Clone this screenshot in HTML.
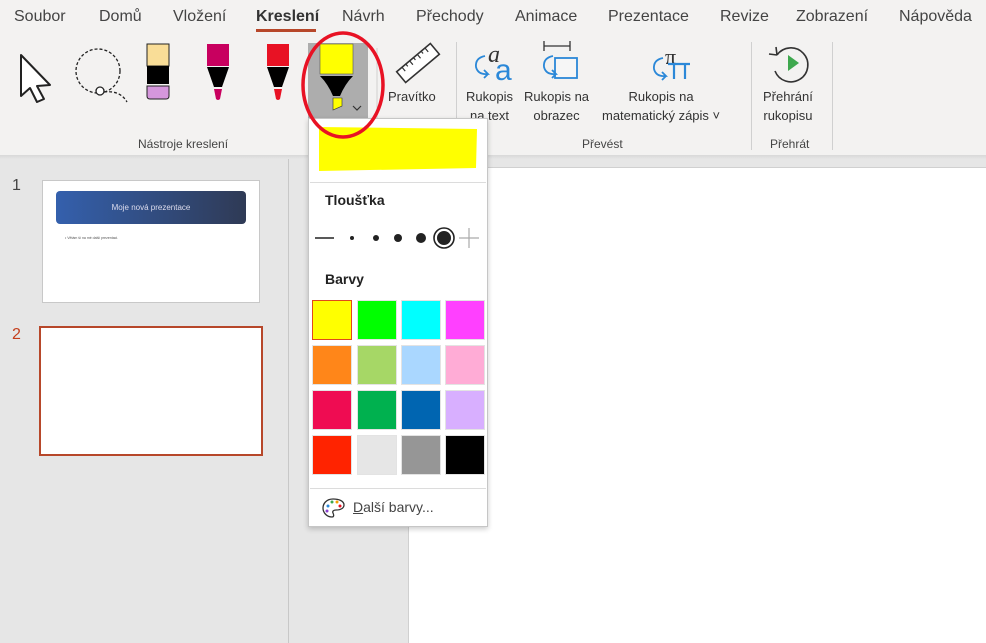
<!DOCTYPE html>
<html><head><meta charset="utf-8"><style>
*{margin:0;padding:0;box-sizing:border-box}
body{width:986px;height:643px;overflow:hidden;background:#e6e6e6;font-family:"Liberation Sans","DejaVu Sans",sans-serif;position:relative;color:#333}
.a{position:absolute}
.tab{position:absolute;top:8px;font-size:16px;color:#444;white-space:nowrap}
.lbl{position:absolute;font-size:13px;color:#333;text-align:center;line-height:19px;white-space:nowrap}
.grp{position:absolute;font-size:12px;color:#444;top:137px;white-space:nowrap}
.sw{position:absolute;width:40px;height:40px;border:1px solid #e3e3e3}
</style></head><body>
<div class="a" style="left:0;top:0;width:986px;height:155px;background:#f3f2f1"></div>
<div class="a" style="left:0;top:155px;width:986px;height:4px;background:linear-gradient(#d8d8d8,#e6e6e6)"></div>
<span class="tab" style="left:14px">Soubor</span>
<span class="tab" style="left:99px">Domů</span>
<span class="tab" style="left:173px">Vložení</span>
<span class="tab" style="left:256px;font-weight:bold;color:#333">Kreslení</span>
<div class="a" style="left:256px;top:29px;width:60px;height:3px;background:#b7472a"></div>
<span class="tab" style="left:342px">Návrh</span>
<span class="tab" style="left:416px">Přechody</span>
<span class="tab" style="left:515px">Animace</span>
<span class="tab" style="left:608px">Prezentace</span>
<span class="tab" style="left:720px">Revize</span>
<span class="tab" style="left:796px">Zobrazení</span>
<span class="tab" style="left:899px">Nápověda</span>

<svg class="a" style="left:0;top:0" width="986" height="130">
<g transform="translate(0,40)">
<path d="M21 15 L21 56 L30 48 L37 62 L44 59 L37 46 L50 45 Z" fill="#fff" stroke="#222" stroke-width="2" stroke-linejoin="round"/>
<circle cx="98" cy="31" r="22" fill="none" stroke="#222" stroke-width="1.3" stroke-dasharray="3 2"/>
<circle cx="100" cy="51" r="4" fill="#fff" stroke="#222" stroke-width="1.3"/>
<path d="M104 52 Q120 50 127 62" fill="none" stroke="#222" stroke-width="1.3" stroke-dasharray="3 2"/>
<rect x="147" y="4" width="22" height="22" fill="#f9dd97" stroke="#222"/>
<rect x="147" y="26" width="22" height="18" fill="#000"/>
<path d="M147 46 H169 V56 Q169 59 166 59 H150 Q147 59 147 56 Z" fill="#d597dc" stroke="#222"/>
<rect x="207" y="4" width="22" height="22" fill="#c8005f"/>
<path d="M207 27 H229 L222 47 H214 Z" fill="#000"/>
<path d="M214 49 H222 L220 59 Q218 61 216 59 Z" fill="#c8005f"/>
<rect x="267" y="4" width="22" height="22" fill="#e81224"/>
<path d="M267 27 H289 L282 47 H274 Z" fill="#000"/>
<path d="M274 49 H282 L280 59 Q278 61 276 59 Z" fill="#e81224"/>
<rect x="308" y="3" width="60" height="85" fill="#adadad"/>
<rect x="320" y="4" width="33" height="30" fill="#ff0" stroke="#555" stroke-width="0.6"/>
<path d="M320 36 H353 Q345 44 340 56 H333 Q328 44 320 36Z" fill="#000"/>
<path d="M333 58 H342 V66 L333 70 Z" fill="#ff0" stroke="#333" stroke-width="0.6"/>
<path d="M353 66 L357 70 L361 66" fill="none" stroke="#333" stroke-width="1.2"/>
<line x1="377" y1="8" x2="377" y2="88" stroke="#d0d0d0"/>
<g transform="translate(418,23) rotate(-40)"><rect x="-22" y="-7" width="44" height="14" fill="#fff" stroke="#333" stroke-width="1.6"/>
<path d="M-15 -7v5M-10 -7v3M-5 -7v5M0 -7v3M5 -7v5M10 -7v3M15 -7v5" stroke="#333" stroke-width="1.2"/></g>
</g>
<!-- convert icons -->
<text x="488" y="62" font-family="Liberation Serif" font-style="italic" font-size="24" fill="#333">a</text>
<path d="M485 56 Q475 58 476 67 Q478 75 488 74 L484 70 M488 74 L484 78" fill="none" stroke="#2b88d8" stroke-width="1.8"/>
<text x="495" y="80" font-size="30" fill="#2b88d8">a</text>
<path d="M544 46 H570 M544 41 v10 M570 41 v10" stroke="#333" stroke-width="1.3"/>
<rect x="555" y="58" width="22" height="20" fill="#f6f6f6" stroke="#2b88d8" stroke-width="1.8"/>
<path d="M553 56 Q543 58 544 67 Q546 75 556 74 L552 70 M556 74 L552 78" fill="none" stroke="#2b88d8" stroke-width="1.8"/>
<text x="665" y="64" font-family="Liberation Serif" font-size="22" fill="#333">π</text>
<path d="M663 58 Q653 60 654 69 Q656 77 666 76 L662 72 M666 76 L662 80" fill="none" stroke="#2b88d8" stroke-width="1.8"/>
<path d="M668 64 H690 M674 64 V79 M685 64 V79" stroke="#2b88d8" stroke-width="2.2" fill="none"/>
<path d="M777 55 A17 17 0 1 1 775 71 M777 55 L776 47 M777 55 L769 54" fill="none" stroke="#333" stroke-width="1.6"/>
<path d="M788 55 L799 63 L788 71 Z" fill="#3ea84e"/>
</svg>
<div class="lbl" style="left:388px;top:87px">Pravítko</div>
<div class="a" style="left:456px;top:42px;width:1px;height:108px;background:#d0d0d0"></div>
<div class="lbl" style="left:466px;top:87px">Rukopis<br>na text</div>
<div class="lbl" style="left:524px;top:87px">Rukopis na<br>obrazec</div>
<div class="lbl" style="left:602px;top:87px">Rukopis na<br>matematický zápis ˅</div>
<div class="a" style="left:751px;top:42px;width:1px;height:108px;background:#d0d0d0"></div>
<div class="lbl" style="left:763px;top:87px">Přehrání<br>rukopisu</div>
<div class="a" style="left:832px;top:42px;width:1px;height:108px;background:#d0d0d0"></div>
<div class="grp" style="left:138px">Nástroje kreslení</div>
<div class="grp" style="left:582px">Převést</div>
<div class="grp" style="left:770px">Přehrát</div>

<!-- left pane -->
<div class="a" style="left:288px;top:159px;width:1px;height:484px;background:#c8c8c8"></div>
<div class="a" style="left:12px;top:177px;font-size:16px;color:#444">1</div>
<div class="a" style="left:42px;top:180px;width:218px;height:123px;background:#fff;border:1px solid #c8c8c8">
 <div class="a" style="left:13px;top:10px;width:190px;height:33px;background:linear-gradient(90deg,#3460ad,#2f3a55);border-radius:4px;color:#dde;font-size:8px;text-align:center;line-height:33px">Moje nová prezentace</div>
 <div class="a" style="left:22px;top:55px;font-size:3.5px;color:#555">• Větám ší na mé další prezentaci.</div>
</div>
<div class="a" style="left:12px;top:326px;font-size:16px;color:#c43e1c">2</div>
<div class="a" style="left:39px;top:326px;width:224px;height:130px;background:#fff;border:2px solid #b7472a"></div>

<!-- slide -->
<div class="a" style="left:408px;top:167px;width:578px;height:476px;background:#fff;border-left:1px solid #d0d0d0;border-top:1px solid #d0d0d0"></div>

<!-- dropdown -->
<div class="a" style="left:308px;top:118px;width:180px;height:409px;background:#fff;border:1px solid #c6c6c6;box-shadow:0 2px 5px rgba(0,0,0,.2)"></div>
<svg class="a" style="left:318px;top:125px" width="162" height="50"><path d="M1 2 L159 4 L158 43 L1 46 Z" fill="#ff0"/></svg>
<div class="a" style="left:310px;top:182px;width:176px;height:1px;background:#dcdcdc"></div>
<div class="a" style="left:325px;top:192px;font-size:14px;font-weight:bold;color:#222">Tloušťka</div>
<svg class="a" style="left:312px;top:225px" width="170" height="26">
<line x1="3" y1="13" x2="22" y2="13" stroke="#222" stroke-width="1.5"/>
<circle cx="40" cy="13" r="2" fill="#222"/><circle cx="64" cy="13" r="3" fill="#222"/>
<circle cx="86" cy="13" r="4" fill="#222"/><circle cx="109" cy="13" r="5" fill="#222"/>
<circle cx="132" cy="13" r="10" fill="none" stroke="#222" stroke-width="1.6"/><circle cx="132" cy="13" r="7" fill="#222"/>
<path d="M147 13 H167 M157 3 V23" stroke="#aaa" stroke-width="1.2"/>
</svg>
<div class="a" style="left:325px;top:271px;font-size:14px;font-weight:bold;color:#222">Barvy</div>
<div class="sw" style="left:312px;top:300px;background:#ff0;border-color:#e04a1a"></div>
<div class="sw" style="left:357px;top:300px;background:#0f0"></div>
<div class="sw" style="left:401px;top:300px;background:#0ff"></div>
<div class="sw" style="left:445px;top:300px;background:#ff40ff"></div>
<div class="sw" style="left:312px;top:345px;background:#ff8619"></div>
<div class="sw" style="left:357px;top:345px;background:#a6d766"></div>
<div class="sw" style="left:401px;top:345px;background:#aad7ff"></div>
<div class="sw" style="left:445px;top:345px;background:#ffacd6"></div>
<div class="sw" style="left:312px;top:390px;background:#ef0c52"></div>
<div class="sw" style="left:357px;top:390px;background:#00b14f"></div>
<div class="sw" style="left:401px;top:390px;background:#0065b1"></div>
<div class="sw" style="left:445px;top:390px;background:#d8afff"></div>
<div class="sw" style="left:312px;top:435px;background:#ff2300"></div>
<div class="sw" style="left:357px;top:435px;background:#e6e6e6"></div>
<div class="sw" style="left:401px;top:435px;background:#969696"></div>
<div class="sw" style="left:445px;top:435px;background:#000"></div>
<div class="a" style="left:310px;top:488px;width:176px;height:1px;background:#dcdcdc"></div>
<svg class="a" style="left:322px;top:497px" width="24" height="22">
<path d="M11 2 C4 2 1 7 1 11 C1 16 5 20 10 20 C12 20 12 18 11 16 C10 14 12 13 14 13 C19 13 22 11 22 8 C22 4 17 2 11 2Z" fill="none" stroke="#333" stroke-width="1.3"/>
<circle cx="6" cy="9" r="1.5" fill="#2b88d8"/><circle cx="10" cy="5" r="1.5" fill="#3ea84e"/><circle cx="15" cy="5" r="1.5" fill="#f7a000"/><circle cx="18" cy="9" r="1.5" fill="#e81224"/><circle cx="5" cy="14" r="1.5" fill="#8a3fd1"/>
</svg>
<div class="a" style="left:353px;top:499px;font-size:14px;color:#444"><u>D</u>alší barvy...</div>

<!-- red annotation ellipse -->
<svg class="a" style="left:295px;top:28px" width="100" height="120">
<ellipse cx="48" cy="57" rx="40" ry="52" fill="none" stroke="#e81224" stroke-width="3.5"/>
</svg>
</body></html>
